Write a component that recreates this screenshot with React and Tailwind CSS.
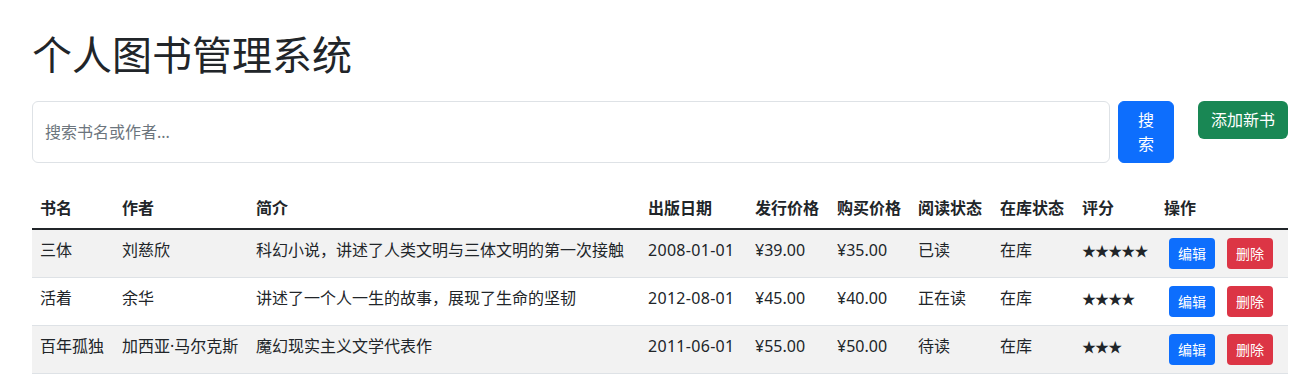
import React from "react";

const books = [
  { name: "三体", author: "刘慈欣", desc: "科幻小说，讲述了人类文明与三体文明的第一次接触", date: "2008-01-01", price: "¥39.00", buy: "¥35.00", read: "已读", stock: "在库", rating: "★★★★★" },
  { name: "活着", author: "余华", desc: "讲述了一个人一生的故事，展现了生命的坚韧", date: "2012-08-01", price: "¥45.00", buy: "¥40.00", read: "正在读", stock: "在库", rating: "★★★★" },
  { name: "百年孤独", author: "加西亚·马尔克斯", desc: "魔幻现实主义文学代表作", date: "2011-06-01", price: "¥55.00", buy: "¥50.00", read: "待读", stock: "在库", rating: "★★★" },
];

const headers = ["书名", "作者", "简介", "出版日期", "发行价格", "购买价格", "阅读状态", "在库状态", "评分", "操作"];
const widths = [82, 134, 392, 107, 82, 81, 82, 82, 82, 132];

export default function App() {
  return (
    <div
      className="w-[1309px] min-h-[392px] bg-white text-[#212529] pl-[32px] pr-[21px] pt-[31px] pb-4"
      style={{ fontFamily: '"Noto Sans", "Noto Sans CJK SC", sans-serif' }}
    >
      <h1 className="text-[40px] leading-[48px] font-normal">个人图书管理系统</h1>
      <div className="mt-[22px] flex items-start">
        <input
          type="text"
          placeholder="搜索书名或作者..."
          className="flex-1 min-w-0 h-[62px] border border-[#dee2e6] rounded-[6px] px-[12px] text-[16px] text-[#212529] placeholder:text-[#6c757d] outline-none"
        />
        <button className="ml-[8px] w-[56px] h-[62px] bg-[#0d6efd] border border-[#0d6efd] text-white rounded-[6px] text-[16px] leading-[24px] px-[12px] py-[6px]">
          搜索
        </button>
        <button className="ml-[24px] w-[90px] h-[38px] bg-[#198754] text-white rounded-[6px] text-[16px] leading-[24px]">
          添加新书
        </button>
      </div>
      <table className="mt-[25px] w-[1256px] table-fixed border-collapse text-[16px] leading-[24px]">
        <colgroup>
          {widths.map((w, i) => (
            <col key={i} style={{ width: w }} />
          ))}
        </colgroup>
        <thead>
          <tr className="border-b-2 border-[#212529]">
            {headers.map((h) => (
              <th key={h} className="text-left font-bold p-[8px] align-top whitespace-nowrap">
                {h}
              </th>
            ))}
          </tr>
        </thead>
        <tbody>
          {books.map((b, i) => (
            <tr key={b.name} className={`border-b border-[#dee2e6] ${i % 2 === 0 ? "bg-[#f2f2f2]" : "bg-white"}`}>
              <td className="p-[8px] align-top whitespace-nowrap">{b.name}</td>
              <td className="p-[8px] align-top whitespace-nowrap">{b.author}</td>
              <td className="p-[8px] align-top whitespace-nowrap">{b.desc}</td>
              <td className="p-[8px] align-top whitespace-nowrap tracking-[0.3px]">{b.date}</td>
              <td className="p-[8px] align-top whitespace-nowrap">{b.price}</td>
              <td className="p-[8px] align-top whitespace-nowrap">{b.buy}</td>
              <td className="p-[8px] align-top whitespace-nowrap">{b.read}</td>
              <td className="p-[8px] align-top whitespace-nowrap">{b.stock}</td>
              <td className="p-[8px] align-top whitespace-nowrap">
                <span className="text-[14px] tracking-[-0.9px]">{b.rating}</span>
              </td>
              <td className="p-[8px] align-top whitespace-nowrap">
                <div className="flex gap-[12px] pl-[5px]">
                  <button className="w-[46px] h-[31px] bg-[#0d6efd] text-white rounded-[4px] text-[14px] leading-[21px]">编辑</button>
                  <button className="w-[46px] h-[31px] bg-[#dc3545] text-white rounded-[4px] text-[14px] leading-[21px]">删除</button>
                </div>
              </td>
            </tr>
          ))}
        </tbody>
      </table>
    </div>
  );
}
